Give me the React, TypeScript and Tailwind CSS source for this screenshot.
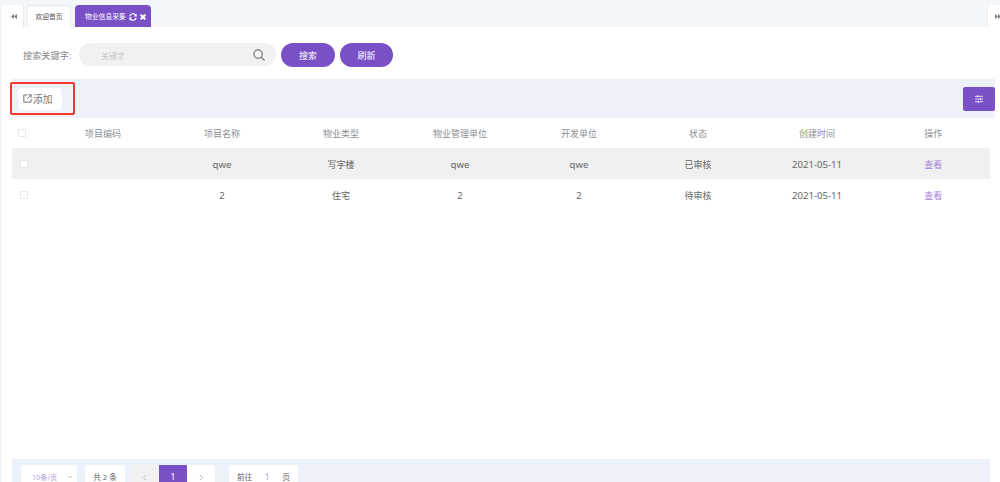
import type { ReactNode } from 'react';
import { ChevronDown, ChevronLeft, ChevronRight } from 'lucide-react';

interface PropertyRow {
    name: string;
    type: string;
    manager: string;
    developer: string;
    status: string;
    created: string;
}

const headers = ['项目编码', '项目名称', '物业类型', '物业管理单位', '开发单位', '状态', '创建时间'];

const rows: PropertyRow[] = [
    { name: 'qwe', type: '写字楼', manager: 'qwe', developer: 'qwe', status: '已审核', created: '2021-05-11' },
    { name: '2', type: '住宅', manager: '2', developer: '2', status: '待审核', created: '2021-05-11' },
];

function Checkbox() {
    return <span className="mb-[2px] block size-2 rounded-[1px] border border-[#e8e8ea] bg-white" />;
}

function Cell({ children }: { children?: ReactNode }) {
    return <div className="w-[119px] shrink-0 text-center">{children}</div>;
}

// latin values sit slightly larger than the chinese ones
function Latin({ children }: { children: ReactNode }) {
    return <span className="inline-block pt-px text-[9.6px]">{children}</span>;
}

function RewindIcon({ className }: { className?: string }) {
    return (
        <svg className={className} viewBox="0 0 7 6" fill="currentColor">
            <path d="M3.4 0v6L0 3zM7 0v6L3.6 3z" />
        </svg>
    );
}

function TabBar() {
    return (
        <div className="flex h-[27px] items-end bg-[#f3f7f9] text-[6.8px] text-[#555]">
            <div className="flex h-[22px] w-[22px] items-center justify-center border-r border-[#e9eced] bg-white pl-[2px]">
                <RewindIcon className="h-[5px] w-[6px] text-[#777]" />
            </div>
            <div className="ml-[3px] flex h-[22px] w-[44px] items-center justify-center rounded-t border border-b-0 border-[#e9eced] bg-white pt-[2px]">
                欢迎首页
            </div>
            <div className="ml-1 flex h-[22px] w-[76px] items-center rounded-t bg-[#7a50c7] pl-[10px] pt-[2px] text-white">
                <span>物业信息采集</span>
                <svg className="ml-[3px] size-[8px]" viewBox="0 0 8 8" fill="none" stroke="currentColor" strokeWidth="1.2">
                    <path d="M.8 3.3A3.2 3.2 0 0 1 6.6 2.1M7.2 4.7A3.2 3.2 0 0 1 1.4 5.9" />
                    <path d="M7.7.4v3H4.8zM.3 7.6v-3h2.9z" fill="currentColor" stroke="none" />
                </svg>
                <svg className="ml-[3px] size-[6px]" viewBox="0 0 6 6" fill="none" stroke="currentColor" strokeWidth="2">
                    <path d="M.6.6l4.8 4.8M5.4.6.6 5.4" />
                </svg>
            </div>
            <div className="ml-auto flex h-[22px] w-[13px] items-center overflow-hidden border-l border-[#e9eced] bg-white pl-[7px]">
                <RewindIcon className="h-[5px] w-[6px] shrink-0 rotate-180 text-[#777]" />
            </div>
        </div>
    );
}

function SearchBar() {
    return (
        <div className="flex h-[52px] items-center pl-[21px] pt-[3px] text-[9.2px]">
            <span className="w-[56px] whitespace-nowrap pt-[2px] text-[#888]">搜索关键字:</span>
            <div className="flex h-[23px] w-[197px] items-center justify-between rounded-full bg-[#f1f1f1] pl-[22px] pr-[11px]">
                <span className="pt-[2px] text-[8px] text-[#c5c8cf]">关键字</span>
                <svg className="mt-px size-3 text-[#777]" viewBox="0 0 13 13" fill="none" stroke="currentColor" strokeWidth="1.3">
                    <circle cx="5.5" cy="5.5" r="4.6" />
                    <path d="M8.7 8.7 12.6 12.6" />
                </svg>
            </div>
            <button className="ml-[5px] h-6 w-[54px] rounded-full bg-[#7a50c7] pt-[2px] text-[9px] text-white">搜索</button>
            <button className="ml-[5px] h-6 w-[53px] rounded-full bg-[#7a50c7] pt-[2px] text-[9px] text-white">刷新</button>
        </div>
    );
}

function Toolbar() {
    return (
        <div className="relative ml-[10px] mr-[5px] flex h-[39px] items-center justify-between bg-[#edf1fa] pl-[6px]">
            <button className="flex h-[22px] w-[44px] items-center rounded bg-white pl-[5px] text-[9.8px] text-[#777]">
                <svg className="mr-px size-[9px] shrink-0" viewBox="0 0 9 9" fill="none" stroke="currentColor" strokeWidth="1">
                    <path d="M4.3 1H.8v7.2h7.3V5M5.3.8h2.9v2.9M8 1 4.2 4.8" />
                </svg>
                <span className="pt-[3px]">添加</span>
            </button>
            <button className="flex h-6 w-8 items-center justify-center rounded-[2px] bg-[#7a50c7] text-white">
                <svg className="size-2" viewBox="0 0 8 8" fill="none" stroke="currentColor" strokeWidth="0.8">
                    <path d="M0 1.3h8M0 4h8M0 6.7h8M2.5.4v1.8M5.5 3.1v1.8M3.5 5.8v1.8" />
                </svg>
            </button>
            {/* highlight around the add button */}
            <div className="absolute -left-[2px] top-[3px] h-[33px] w-[65px] rounded-[2px] border-2 border-[#f5372f]" />
        </div>
    );
}

function DataTable() {
    return (
        <div className="ml-[10px] mr-[10px] text-[9px] text-[#666]">
            <div className="flex h-[30px] items-center pt-px text-[#8c8f94]">
                <div className="w-[31.5px] shrink-0 pl-[6px]"><Checkbox /></div>
                {headers.map((header) => <Cell key={header}>{header}</Cell>)}
                <div className="flex-1 text-center">操作</div>
            </div>
            {rows.map((row, i) => (
                <div key={i} className="flex h-[31px] items-center pt-[2px] odd:bg-white even:bg-[#f0f0f0]">
                    <div className="w-[31.5px] shrink-0 pl-2"><Checkbox /></div>
                    <Cell />
                    <Cell><Latin>{row.name}</Latin></Cell>
                    <Cell>{row.type}</Cell>
                    <Cell><Latin>{row.manager}</Latin></Cell>
                    <Cell><Latin>{row.developer}</Latin></Cell>
                    <Cell>{row.status}</Cell>
                    <Cell><Latin>{row.created}</Latin></Cell>
                    <div className="flex-1 text-center text-[#a384dc]">查看</div>
                </div>
            ))}
        </div>
    );
}

function Pagination() {
    return (
        <div className="ml-[10px] mr-[10px] mt-auto flex h-[23px] shrink-0 items-start overflow-hidden bg-[#edf1fa] pl-[9px] pt-[6px] text-[7.6px] text-[#666]">
            <div className="flex h-[24px] w-[56px] items-center justify-between rounded-[2px] bg-white pl-[11px] pr-[3px] text-[7.2px] text-[#b59be3]">
                10条/页
                <ChevronDown className="size-[8px] text-[#aaa]" />
            </div>
            <div className="ml-2 flex h-[24px] w-10 items-center justify-center rounded-[2px] bg-white pt-px">共 2 条</div>
            <div className="ml-[5px] flex h-[24px] w-[29px] items-center justify-center rounded-l-[2px] bg-[#f1f1f1]">
                <ChevronLeft className="size-[9px] text-[#aaa]" />
            </div>
            <div className="flex h-[24px] w-7 items-center justify-center bg-[#7a50c7] pt-px text-[8.5px] text-white">1</div>
            <div className="flex h-[24px] w-7 items-center justify-center rounded-r-[2px] bg-white">
                <ChevronRight className="size-[9px] text-[#999]" />
            </div>
            <div className="ml-[14px] flex h-[24px] w-[69px] items-center rounded-[2px] bg-white pl-2 pt-px">
                <span>前往</span>
                <span className="w-[30px] text-center text-[8.5px] text-[#b59be3]">1</span>
                <span>页</span>
            </div>
        </div>
    );
}

export default function App() {
    return (
        <div className="h-[482px] w-[1000px] overflow-hidden bg-[#f3f7f9] pl-[2px] font-['Noto_Sans','Noto_Sans_CJK_SC',sans-serif]">
            <div className="flex h-full flex-col bg-white">
                <TabBar />
                <SearchBar />
                <Toolbar />
                <DataTable />
                <Pagination />
            </div>
        </div>
    );
}
